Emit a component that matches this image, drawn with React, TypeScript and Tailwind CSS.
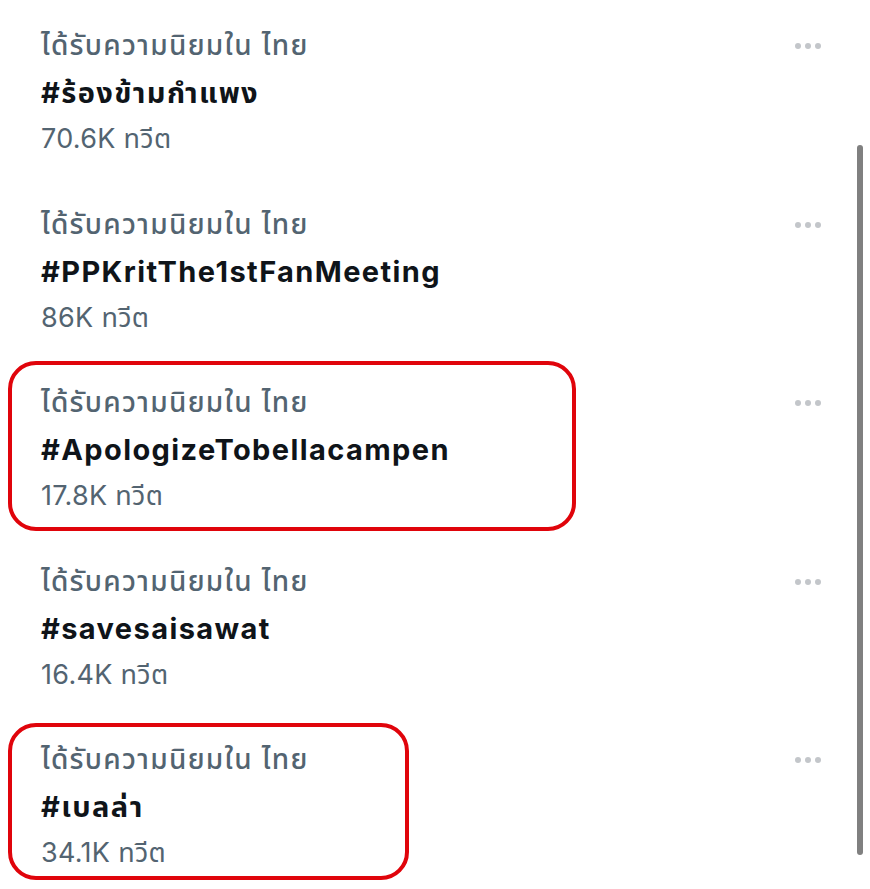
import React from "react";

const trends = [
  { tag: "#ร้องข้ามกำแพง", count: "70.6K", boxed: null },
  { tag: "#PPKritThe1stFanMeeting", count: "86K", boxed: null },
  { tag: "#ApologizeTobellacampen", count: "17.8K", boxed: "wide" },
  { tag: "#savesaisawat", count: "16.4K", boxed: null },
  { tag: "#เบลล่า", count: "34.1K", boxed: "narrow" },
];

function Dots() {
  return (
    <svg width="28" height="8" viewBox="0 0 28 8" className="block">
      <circle cx="4" cy="4" r="3" fill="#c3c6ca" />
      <circle cx="14" cy="4" r="3" fill="#c3c6ca" />
      <circle cx="24" cy="4" r="3" fill="#c3c6ca" />
    </svg>
  );
}

export default function App() {
  return (
    <div
      className="relative w-[870px] h-[889px] bg-white overflow-hidden"
      style={{ fontFamily: "Inter, 'Noto Sans', 'Noto Sans Thai', sans-serif" }}
    >
      <div className="flex flex-col pt-[22px]">
        {trends.map((t, i) => (
          <div key={i} className="relative flex h-[178.5px]">
            {t.boxed === "wide" && (
              <div className="absolute left-[8px] top-[-18px] w-[568px] h-[170px] rounded-[28px] border-[4px] border-[#e0040b]" />
            )}
            {t.boxed === "narrow" && (
              <div className="absolute left-[8px] top-[-13px] w-[401px] h-[157px] rounded-[28px] border-[4px] border-[#e0040b]" />
            )}
            <div className="flex flex-col pl-[41px] flex-1">
              <div className="h-[47px] leading-[47px] text-[28px] font-medium text-[#536471] tracking-[1.3px]">
                ได้รับความนิยมใน ไทย
              </div>
              <div className="h-[47px] leading-[47px] text-[29px] font-bold text-[#0f1419] tracking-[1.4px]">
                {t.tag}
              </div>
              <div className="h-[46px] leading-[46px] text-[27px] text-[#536471] tracking-[0.3px]">
                {t.count} ทวีต
              </div>
            </div>
            <div className="pr-[48px] pt-[20px]">
              <Dots />
            </div>
          </div>
        ))}
      </div>
      <div className="absolute left-[857px] top-[145px] w-[6px] h-[710px] rounded-full bg-[#808080]" />
    </div>
  );
}
